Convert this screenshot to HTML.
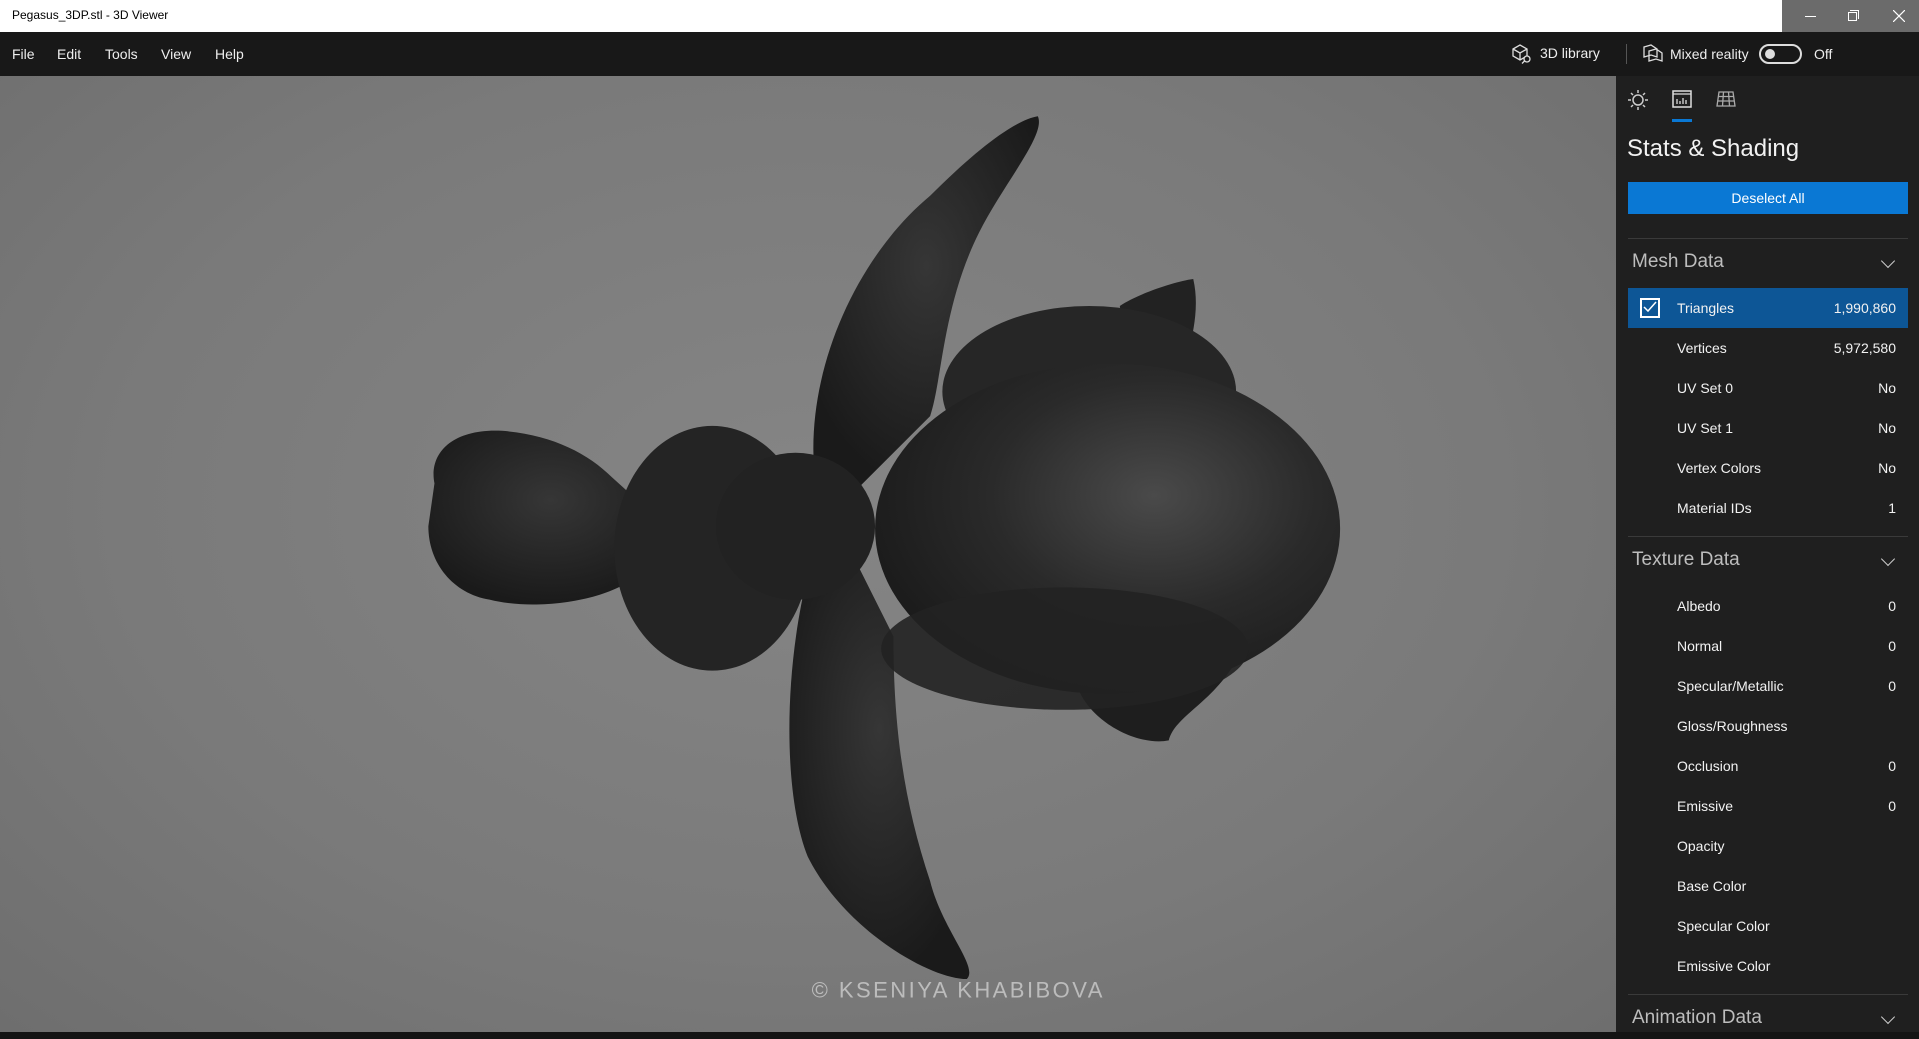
<!DOCTYPE html>
<html><head><meta charset="utf-8">
<style>
*{margin:0;padding:0;box-sizing:border-box}
body{width:1919px;height:1039px;overflow:hidden;background:#1f1f1f;font-family:"Segoe UI","Liberation Sans",sans-serif;position:relative;color:#fff}
.abs{position:absolute}
#title{left:0;top:0;width:1919px;height:32px;background:#fff;color:#000;font-size:12px}
#title span{position:absolute;left:12px;top:8px}
#wc{left:1782px;top:0;width:137px;height:32px;background:#6b6b6b}
#menu{left:0;top:32px;width:1919px;height:44px;background:#181818;font-size:14px}
#menu .m{position:absolute;top:14px;color:#eee}
#view{left:0;top:76px;width:1616px;height:956px;background:radial-gradient(ellipse at 50% 45%,#858585 0%,#7a7a7a 60%,#6e6e6e 100%)}
#panel{left:1616px;top:76px;width:303px;height:956px;background:#1f1f1f}
.row{position:absolute;left:1677px;font-size:14px;color:#f2f2f2}
.val{position:absolute;right:23px;font-size:14px;color:#f2f2f2}
.hdr{position:absolute;left:1632px;font-size:19px;color:#bdbdbd}
.chev{position:absolute;left:1883px;width:10px;height:10px;border-right:1.5px solid #ccc;border-bottom:1.5px solid #ccc;transform:rotate(45deg)}
.div{position:absolute;left:1628px;width:280px;height:1px;background:#3a3a3a}
</style></head><body>
<div id="title" class="abs"><span>Pegasus_3DP.stl - 3D Viewer</span></div>
<div id="wc" class="abs">
<div class="abs" style="left:23px;top:16px;width:11px;height:1px;background:#fff"></div>
<div class="abs" style="left:66px;top:12px;width:9px;height:9px;border:1px solid #fff"></div>
<div class="abs" style="left:68px;top:10px;width:9px;height:9px;border-top:1px solid #fff;border-right:1px solid #fff"></div>
<svg class="abs" style="left:111px;top:10px" width="12" height="12"><path d="M0 0L12 12M12 0L0 12" stroke="#fff" stroke-width="1.2"/></svg>
</div>
<div id="menu" class="abs">
<span class="m" style="left:12px">File</span><span class="m" style="left:57px">Edit</span><span class="m" style="left:105px">Tools</span><span class="m" style="left:161px">View</span><span class="m" style="left:215px">Help</span>
<svg class="abs" style="left:1511px;top:12px" width="22" height="20" viewBox="0 0 22 20"><path d="M2 5L9 1L16 5V12L9 16L2 12Z M2 5L9 9L16 5 M9 9V16" fill="none" stroke="#ddd" stroke-width="1.3"/><circle cx="16" cy="15" r="3" fill="#181818" stroke="#ddd" stroke-width="1.3"/><path d="M13.5 17L11 19.5" stroke="#ddd" stroke-width="1.3"/></svg>
<span class="m" style="left:1540px;top:13px">3D library</span>
<div class="abs" style="left:1626px;top:12px;width:1px;height:20px;background:#555"></div>
<svg class="abs" style="left:1643px;top:12px" width="20" height="20" viewBox="0 0 20 20"><path d="M1 3L8 1L14 5V13L8 11L1 13Z M6 7L13 5L19 9V17L13 15L6 17Z" fill="none" stroke="#ddd" stroke-width="1.3"/></svg>
<span class="m" style="left:1670px;top:14px">Mixed reality</span>
<div class="abs" style="left:1759px;top:12px;width:43px;height:20px;border:2px solid #ddd;border-radius:10px"><div class="abs" style="left:4px;top:3px;width:10px;height:10px;border-radius:5px;background:#ddd"></div></div>
<span class="m" style="left:1814px;top:14px">Off</span>
</div>
<div id="view" class="abs"></div>
<svg class="abs" style="left:0;top:0" width="1919" height="1039" viewBox="0 0 1568 849" preserveAspectRatio="none">
<defs><radialGradient id="g" cx="0.6" cy="0.4" r="0.7"><stop offset="0" stop-color="#4a4a4a"/><stop offset="0.5" stop-color="#2a2a2a"/><stop offset="1" stop-color="#181818"/></radialGradient>
<radialGradient id="g2" cx="0.5" cy="0.4" r="0.6"><stop offset="0" stop-color="#363636"/><stop offset="1" stop-color="#1a1a1a"/></radialGradient></defs>
<path d="M665 380C660 300 700 210 760 160C800 120 830 98 848 95C855 110 820 150 800 190C770 250 770 310 760 340L700 400Z" fill="url(#g2)"/>
<path d="M660 470C640 550 640 650 660 700C690 760 760 800 790 800C800 790 770 760 760 720C740 660 730 600 730 520L700 460Z" fill="url(#g2)"/>
<path d="M915 250C930 240 960 230 975 228C980 250 975 270 972 285L920 290Z" fill="#222"/>
<path d="M880 560C890 590 930 610 955 605C960 585 990 575 1010 540L960 520Z" fill="#1e1e1e"/>
<path d="M355 395C350 370 370 350 410 352C450 355 480 370 500 390L550 435L520 470C500 490 440 500 400 490C370 485 350 460 350 430Z" fill="url(#g2)"/>
<ellipse cx="582" cy="448" rx="80" ry="100" fill="#242424"/>
<ellipse cx="650" cy="430" rx="65" ry="60" fill="#222"/>
<ellipse cx="890" cy="320" rx="120" ry="70" fill="#262626"/>
<ellipse cx="905" cy="432" rx="190" ry="135" fill="url(#g)"/>
<ellipse cx="870" cy="530" rx="150" ry="50" fill="#222" opacity="0.9"/>
<text x="783" y="815" text-anchor="middle" font-family="Liberation Sans,sans-serif" font-size="18" letter-spacing="2" fill="#c8c8c8" opacity="0.85">© KSENIYA KHABIBOVA</text>
</svg>
<div id="panel" class="abs"></div>
<svg class="abs" style="left:1627px;top:89px" width="22" height="22" viewBox="0 0 22 22"><circle cx="11" cy="11" r="5" fill="none" stroke="#ccc" stroke-width="1.5"/><path d="M11 1V4M11 18V21M1 11H4M18 11H21M4 4L6 6M16 16L18 18M4 18L6 16M16 6L18 4" stroke="#ccc" stroke-width="1.5"/></svg>
<svg class="abs" style="left:1672px;top:90px" width="20" height="18" viewBox="0 0 20 18"><rect x="1" y="1" width="18" height="16" fill="none" stroke="#ddd" stroke-width="1.5"/><path d="M1 4H19M5 14V9M8 14V11M11 14V8M14 14V10" stroke="#ddd" stroke-width="1.3"/></svg>
<div class="abs" style="left:1672px;top:119px;width:20px;height:3px;background:#0a78d4"></div>
<svg class="abs" style="left:1716px;top:91px" width="20" height="16" viewBox="0 0 20 16"><path d="M3 1H17L19 15H1Z M2 5.5H18M1.5 10H18.5M7.5 1L6.5 15M12.5 1L13.5 15" fill="none" stroke="#aaa" stroke-width="1.3"/></svg>
<div class="abs" style="left:1627px;top:135px;font-size:24px;color:#f2f2f2">Stats &amp; Shading</div>
<div class="abs" style="left:1628px;top:182px;width:280px;height:32px;background:#0a78d4;font-size:14px;text-align:center;line-height:32px">Deselect All</div>
<div class="div" style="top:238px"></div>
<div class="hdr" style="top:251px">Mesh Data</div><div class="chev" style="top:256px"></div>
<div class="abs" style="left:1628px;top:288px;width:280px;height:40px;background:#0d5696"></div>
<div class="abs" style="left:1640px;top:298px;width:20px;height:20px;border:2px solid #fff"></div>
<svg class="abs" style="left:1643px;top:300px" width="14" height="14"><path d="M1 7L5 11L13 2" fill="none" stroke="#fff" stroke-width="1.5"/></svg>
<div class="row" style="top:300px">Triangles</div><div class="val" style="top:300px">1,990,860</div>
<div class="row" style="top:340px">Vertices</div><div class="val" style="top:340px">5,972,580</div>
<div class="row" style="top:380px">UV Set 0</div><div class="val" style="top:380px">No</div>
<div class="row" style="top:420px">UV Set 1</div><div class="val" style="top:420px">No</div>
<div class="row" style="top:460px">Vertex Colors</div><div class="val" style="top:460px">No</div>
<div class="row" style="top:500px">Material IDs</div><div class="val" style="top:500px">1</div>
<div class="div" style="top:536px"></div>
<div class="hdr" style="top:549px">Texture Data</div><div class="chev" style="top:554px"></div>
<div class="row" style="top:598px">Albedo</div><div class="val" style="top:598px">0</div>
<div class="row" style="top:638px">Normal</div><div class="val" style="top:638px">0</div>
<div class="row" style="top:678px">Specular/Metallic</div><div class="val" style="top:678px">0</div>
<div class="row" style="top:718px">Gloss/Roughness</div>
<div class="row" style="top:758px">Occlusion</div><div class="val" style="top:758px">0</div>
<div class="row" style="top:798px">Emissive</div><div class="val" style="top:798px">0</div>
<div class="row" style="top:838px">Opacity</div>
<div class="row" style="top:878px">Base Color</div>
<div class="row" style="top:918px">Specular Color</div>
<div class="row" style="top:958px">Emissive Color</div>
<div class="div" style="top:994px"></div>
<div class="hdr" style="top:1007px">Animation Data</div><div class="chev" style="top:1012px"></div>
<div class="abs" style="left:0;top:1032px;width:1919px;height:7px;background:#141414"></div>
</body></html>
